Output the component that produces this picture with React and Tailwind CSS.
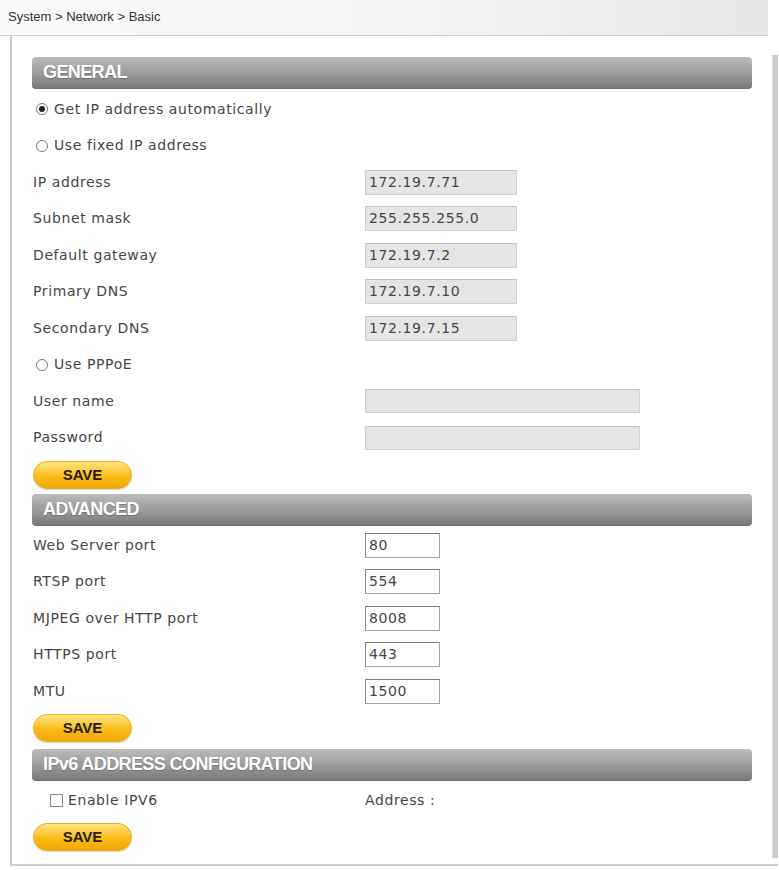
import React from "react";

const labelFont = "font-['DejaVu_Sans',Verdana,sans-serif] text-[14px] tracking-[0.6px] text-[#454545]";

function SectionHeader({ title }) {
  return (
    <div className="h-[32px] w-[720px] rounded-[4px] bg-linear-to-b from-[#bcbcbc] via-[#9d9d9d] to-[#7b7b7b] border-b border-[#6d6d6d] flex items-center pl-[11px]">
      <span className="font-['Liberation_Sans',Arial,sans-serif] font-bold text-[18px] tracking-[-0.6px] text-white [text-shadow:0_1px_1px_rgba(0,0,0,0.25)]">
        {title}
      </span>
    </div>
  );
}

function Row({ label, children }) {
  return (
    <div className="h-[36.5px] flex items-center">
      <div className={`w-[333px] pl-[1px] ${labelFont}`}>{label}</div>
      {children}
    </div>
  );
}

function Radio({ checked, label }) {
  return (
    <div className="h-[36.5px] flex items-center pl-[4px] gap-[6px]">
      <span className="w-[12px] h-[12px] rounded-full border border-[#7a7a7a] bg-white flex items-center justify-center">
        {checked && <span className="w-[6px] h-[6px] rounded-full bg-[#222]" />}
      </span>
      <span className={labelFont}>{label}</span>
    </div>
  );
}

function GrayInput({ value = "", wide }) {
  return (
    <div
      className={`${wide ? "w-[275px] h-[24px]" : "w-[152px] h-[25px]"} bg-[#e5e5e5] border border-[#d0d0d0] border-t-[#c4c4c4] px-[3px] flex items-center ${labelFont}`}
    >
      {value}
    </div>
  );
}

function PortInput({ value }) {
  return (
    <div className={`w-[75px] h-[25px] bg-white border border-[#a3a3a3] border-t-[#7c7c7c] border-l-[#8a8a8a] px-[3px] flex items-center ${labelFont}`}>
      {value}
    </div>
  );
}

function SaveButton({ className = "" }) {
  return (
    <button
      className={`w-[99px] h-[28px] rounded-full bg-linear-to-b from-[#ffe57a] via-[#fbc01a] to-[#f1a600] border border-[#eaae20] shadow-[0_1px_1px_rgba(0,0,0,0.18)] font-['Liberation_Sans',Arial,sans-serif] font-bold text-[15px] text-[#241b00] ${className}`}
    >
      SAVE
    </button>
  );
}

export default function App() {
  return (
    <div className="w-[779px] h-[870px] bg-white overflow-hidden">
      <div className="h-[36px] w-[768px] bg-linear-to-r from-[#f9f9f9] via-[#f5f5f5] to-[#e6e6e6] border-b border-[#d2d2d2] pl-[8px] pt-[3px]">
        <span className="font-['Liberation_Sans',Arial,sans-serif] text-[13px] leading-[16px] text-[#333]">
          System &gt; Network &gt; Basic
        </span>
      </div>

      <div className="ml-[10px] w-[768px] h-[830px] border-l-2 border-b-2 border-[#cdcdcd] flex">
        <div className="w-[760px] pl-[20px] pt-[21px]">
          <SectionHeader title="GENERAL" />
          <div className="mt-[2px]">
            <Radio checked label="Get IP address automatically" />
            <Radio label="Use fixed IP address" />
            <Row label="IP address">
              <GrayInput value="172.19.7.71" />
            </Row>
            <Row label="Subnet mask">
              <GrayInput value="255.255.255.0" />
            </Row>
            <Row label="Default gateway">
              <GrayInput value="172.19.7.2" />
            </Row>
            <Row label="Primary DNS">
              <GrayInput value="172.19.7.10" />
            </Row>
            <Row label="Secondary DNS">
              <GrayInput value="172.19.7.15" />
            </Row>
            <Radio label="Use PPPoE" />
            <Row label="User name">
              <GrayInput wide />
            </Row>
            <Row label="Password">
              <GrayInput wide />
            </Row>
          </div>
          <SaveButton className="mt-[5px] ml-[1px]" />

          <div className="mt-[5px]">
            <SectionHeader title="ADVANCED" />
          </div>
          <div className="mt-[1px]">
            <Row label="Web Server port">
              <PortInput value="80" />
            </Row>
            <Row label="RTSP port">
              <PortInput value="554" />
            </Row>
            <Row label="MJPEG over HTTP port">
              <PortInput value="8008" />
            </Row>
            <Row label="HTTPS port">
              <PortInput value="443" />
            </Row>
            <Row label="MTU">
              <PortInput value="1500" />
            </Row>
          </div>
          <SaveButton className="mt-[4.5px] ml-[1px]" />

          <div className="mt-[7px]">
            <SectionHeader title="IPv6 ADDRESS CONFIGURATION" />
          </div>
          <div className="mt-[1px] h-[36px] flex items-center">
            <div className="w-[333px] pl-[18px] flex items-center gap-[5px]">
              <span className="w-[13px] h-[13px] border border-[#8a8a8a] bg-white" />
              <span className={labelFont}>Enable IPV6</span>
            </div>
            <span className={labelFont}>Address :</span>
          </div>
          <SaveButton className="mt-[5px] ml-[1px]" />
        </div>
        <div className="w-[6px] mt-[19px] h-[803px] bg-[#cbcbcb] border-l border-[#dedede]" />
      </div>
    </div>
  );
}
